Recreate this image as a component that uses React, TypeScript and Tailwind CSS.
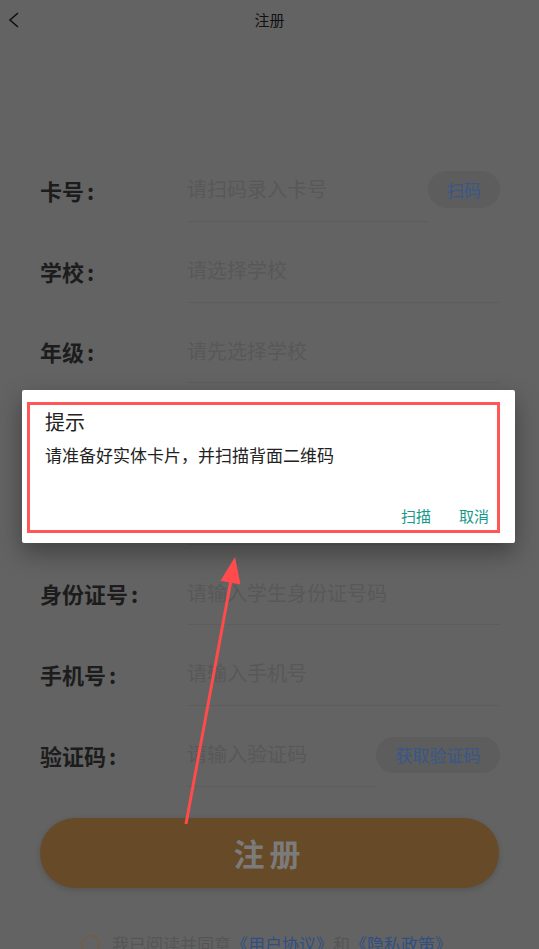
import React from 'react';

// rows 4 and 5 sit behind the dialog, so only their divider lines are drawn
const rows = [
  { label: '卡号', placeholder: '请扫码录入卡号', action: '扫码' },
  { label: '学校', placeholder: '请选择学校' },
  { label: '年级', placeholder: '请先选择学校' },
  { label: '', placeholder: '' },
  { label: '', placeholder: '' },
  { label: '身份证号', placeholder: '请输入学生身份证号码' },
  { label: '手机号', placeholder: '请输入手机号' },
  { label: '验证码', placeholder: '请输入验证码', action: '获取验证码' },
];

export default function App() {
  return (
    <div className="relative w-[539px] h-[949px] overflow-hidden bg-[#636363] font-['Noto_Sans_CJK_SC',sans-serif]">
      {/* Header */}
      <div className="flex items-center h-[40px]">
        <div className="w-[60px] pl-[8px] flex items-center">
          <svg width="14" height="18" viewBox="0 0 14 18" fill="none">
            <polyline points="10,2 2,9 10,16" stroke="#111" strokeWidth="1.6" />
          </svg>
        </div>
        <div className="flex-1 text-center text-[15px] text-[#111]">注册</div>
        <div className="w-[60px]" />
      </div>

      {/* Form */}
      <div className="pt-[109.5px]">
        {rows.map((row, i) => (
          <div key={i} className="flex items-center h-[80.7px] pl-[40px] pr-[39px]">
            <div className="w-[147px] text-[22px] font-bold text-[#1c1c1c] leading-none">
              {row.label && (
                <>
                  {row.label}
                  <span className="ml-[3px]">:</span>
                </>
              )}
            </div>
            <div className="flex-1 flex items-center h-[64px] border-b border-[#5d5d5d]">
              <span className="text-[20px] text-[#585858]">{row.placeholder}</span>
            </div>
            {row.action && (
              <div
                className={
                  row.action === '扫码'
                    ? 'w-[72px] h-[37px] rounded-full bg-[#5d5d5d] flex items-center justify-center text-[17px] text-[#37578a]'
                    : 'w-[124px] h-[36px] rounded-full bg-[#5d5d5d] flex items-center justify-center text-[17px] text-[#37578a]'
                }
              >
                {row.action}
              </div>
            )}
          </div>
        ))}
      </div>

      {/* Submit */}
      <div className="mx-[40px] mt-[23px] h-[70px] rounded-full bg-[#674a27] shadow-[0_2px_6px_rgba(0,0,0,0.15)] flex items-center justify-center">
        <span className="text-[31px] font-bold tracking-[5px] text-[#7b7b7b]">注册</span>
      </div>

      {/* Agreement */}
      <div className="flex items-center mt-[46px] pl-[81px] gap-[12px]">
        <div className="w-[19px] h-[19px] rounded-full border border-[#7a5a30]" />
        <span className="text-[17px] text-[#555555] leading-[20px]">
          我已阅读并同意<span className="text-[#2f4f82]">《用户协议》</span>和<span className="text-[#2f4f82]">《隐私政策》</span>
        </span>
      </div>

      {/* Dialog */}
      <div className="absolute left-[22px] top-[390px] w-[493px] h-[153px] bg-white rounded-[2px] shadow-[0_10px_24px_rgba(0,0,0,0.35)] flex flex-col pl-[23px] pr-[26px] pt-[18px] pb-[16px]">
        <div className="absolute left-[5px] top-[12px] w-[473px] h-[131px] border-[3px] border-[#ff5757]" />
        <div className="text-[20px] leading-[28px] text-[#222]">提示</div>
        <div className="mt-[7px] text-[17px] leading-[24px] text-[#222]">请准备好实体卡片，并扫描背面二维码</div>
        <div className="mt-auto flex justify-end gap-[28px] text-[15px] leading-[22px] text-[#17998a]">
          <span>扫描</span>
          <span>取消</span>
        </div>
      </div>

      {/* Annotation arrow */}
      <svg className="absolute left-0 top-0 pointer-events-none" width="539" height="949" viewBox="0 0 539 949">
        <line x1="186" y1="824" x2="231" y2="580" stroke="#ff4b4b" strokeWidth="3" />
        <polygon points="235,557 240.5,584.5 220.5,580.8" fill="#ff4b4b" />
      </svg>
    </div>
  );
}
